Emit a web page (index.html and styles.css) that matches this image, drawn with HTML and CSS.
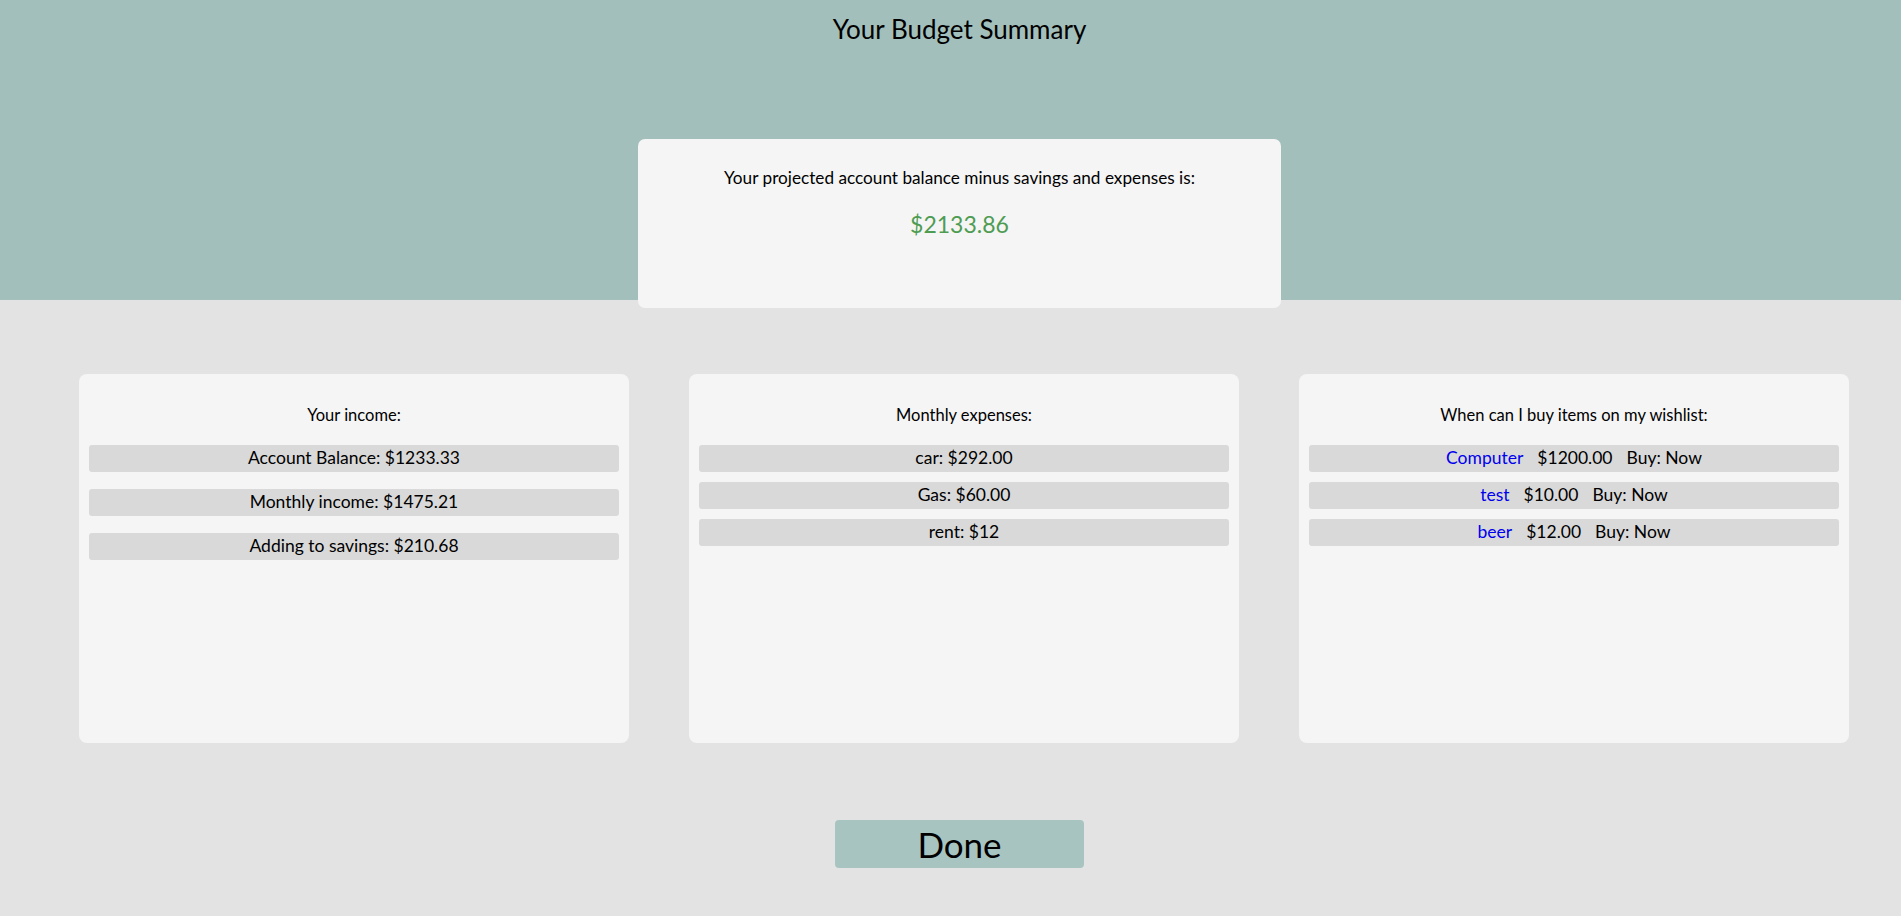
FILE: index.html
```html
<!DOCTYPE html>
<html lang="en">
<head>
<meta charset="utf-8">
<title>Your Budget Summary</title>
<link rel="stylesheet" href="styles.css">
</head>
<body>
  <header class="hero">
    <h1 class="hero-title">Your Budget Summary</h1>
    <section class="balance-card">
      <p class="balance-label">Your projected account balance minus savings and expenses is:</p>
      <p class="balance-amount">$2133.86</p>
    </section>
  </header>

  <main class="panels">
    <section class="panel">
      <h2 class="panel-title">Your income:</h2>
      <ul class="rows rows-spaced">
        <li class="row">Account Balance: $1233.33</li>
        <li class="row">Monthly income: $1475.21</li>
        <li class="row">Adding to savings: $210.68</li>
      </ul>
    </section>
    <section class="panel">
      <h2 class="panel-title">Monthly expenses:</h2>
      <ul class="rows">
        <li class="row">car: $292.00</li>
        <li class="row">Gas: $60.00</li>
        <li class="row">rent: $12</li>
      </ul>
    </section>
    <section class="panel">
      <h2 class="panel-title">When can I buy items on my wishlist:</h2>
      <ul class="rows">
        <li class="row wish"><a class="wish-name" href="#">Computer</a><span>$1200.00</span><span>Buy: Now</span></li>
        <li class="row wish"><a class="wish-name" href="#">test</a><span>$10.00</span><span>Buy: Now</span></li>
        <li class="row wish"><a class="wish-name" href="#">beer</a><span>$12.00</span><span>Buy: Now</span></li>
      </ul>
    </section>
  </main>

  <div class="actions">
    <button class="done-btn" type="button">Done</button>
  </div>
</body>
</html>
```

FILE: styles.css
```css
* {
  box-sizing: border-box;
}

html, body {
  margin: 0;
  padding: 0;
}

body {
  background: #e3e3e3;
  font-family: Lato, "Open Sans", sans-serif;
  color: #000;
  height: 916px;
  overflow: hidden;
}

.hero {
  background: #a3bfbb;
  height: 300px;
  display: flex;
  flex-direction: column;
  align-items: center;
  padding-left: 18px;
}

.hero-title {
  margin: 14px 0 0;
  font-size: 26px;
  font-weight: 400;
  line-height: 30px;
}

.balance-card {
  margin-top: 95px;
  width: 643px;
  height: 169px;
  flex: none;
  background: #f5f5f5;
  border-radius: 7px;
  text-align: center;
  padding-top: 28px;
}

.balance-label {
  margin: 0;
  font-size: 17.2px;
  line-height: 22px;
}

.balance-amount {
  margin: 20px 0 0;
  font-size: 23px;
  line-height: 30px;
  color: #4e9c52;
}

.panels {
  display: flex;
  gap: 60px;
  padding-left: 79px;
  margin-top: 74px;
}

.panel {
  width: 550px;
  height: 369px;
  background: #f5f5f5;
  border-radius: 8px;
  padding: 31px 10px 0;
}

.panel-title {
  margin: 0;
  text-align: center;
  font-size: 16.5px;
  font-weight: 400;
  line-height: 20px;
}

.rows {
  list-style: none;
  margin: 20px 0 0;
  padding: 0;
  display: flex;
  flex-direction: column;
  gap: 10px;
}

.rows-spaced {
  gap: 17px;
}

.row {
  height: 27px;
  background: #d9d9d9;
  border-radius: 3px;
  font-size: 17.5px;
  line-height: 25px;
  text-align: center;
}

.wish {
  display: flex;
  justify-content: center;
  gap: 14px;
}

.wish-name {
  color: #0000ee;
  text-decoration: none;
}

.actions {
  display: flex;
  justify-content: center;
  margin-top: 77px;
  padding-left: 18px;
}

.done-btn {
  width: 249px;
  height: 48px;
  background: #a8c4c0;
  border: none;
  border-radius: 4px;
  font-family: Lato, "Open Sans", sans-serif;
  font-size: 35px;
  line-height: 48px;
  color: #000;
  padding: 0;
}
```
